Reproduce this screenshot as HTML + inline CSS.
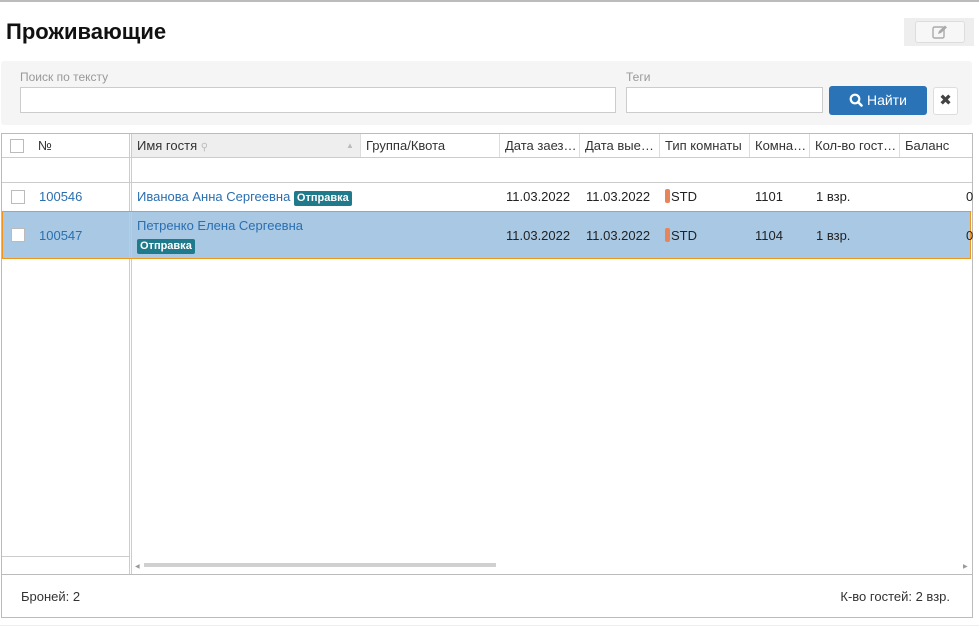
<!DOCTYPE html>
<html><head><meta charset="utf-8"><style>
*{box-sizing:border-box;margin:0;padding:0}
body{width:979px;height:629px;background:#fff;font-family:"Liberation Sans","DejaVu Sans",sans-serif;font-size:13px;color:#222;position:relative;overflow:hidden}
.a{position:absolute}
.t{white-space:nowrap}
.inp{position:absolute;background:#fff;border:1px solid #ccc}
.hc{position:absolute;top:134px;height:23px;line-height:23px;padding-left:5px;border-right:1px solid #ddd;white-space:nowrap;overflow:hidden;color:#333}
.cb{position:absolute;width:14px;height:14px;border:1px solid #bbb;background:#fff}
.lnk{color:#2a6fb0}
.tag{display:inline-block;background:#1f7a8c;color:#fff;font-size:11px;padding:1px 3px;border-radius:2px;line-height:13px;font-weight:bold}
.cell{position:absolute;white-space:nowrap}
</style></head><body>
<div class="a" style="left:0;top:0;width:979px;height:2px;background:#bbb"></div>
<div class="a t" style="left:6px;top:19px;font-size:22px;font-weight:bold;color:#111">Проживающие</div>
<div class="a" style="left:904px;top:18px;width:70px;height:28px;background:#eee"></div>
<div class="a" style="left:915px;top:21px;width:50px;height:22px;background:#f7f7f7;border:1px solid #ddd;border-radius:3px"></div>
<svg class="a" style="left:932px;top:25px" width="16" height="14" viewBox="0 0 16 14"><rect x="1" y="2" width="11" height="11" rx="1.5" fill="none" stroke="#aaa" stroke-width="1.4"/><path d="M6 9 L7 6 L13 0.5 L15 2.5 L9 8 Z" fill="#aaa"/></svg>

<div class="a" style="left:1px;top:61px;width:971px;height:64px;background:#f5f5f5;border-radius:3px"></div>
<div class="a t" style="left:20px;top:70px;font-size:12px;color:#999">Поиск по тексту</div>
<div class="inp" style="left:20px;top:87px;width:596px;height:26px"></div>
<div class="a t" style="left:626px;top:70px;font-size:12px;color:#999">Теги</div>
<div class="inp" style="left:626px;top:87px;width:197px;height:26px"></div>
<div class="a" style="left:829px;top:86px;width:98px;height:29px;background:#2a73b7;border-radius:3px;color:#fff;font-size:14px;line-height:29px;text-align:center">
<svg width="14" height="14" viewBox="0 0 14 14" style="vertical-align:-2px"><circle cx="6" cy="6" r="4.3" fill="none" stroke="#fff" stroke-width="2.2"/><path d="M9 9 L12.5 12.5" stroke="#fff" stroke-width="2.6" stroke-linecap="round"/></svg> Найти</div>
<div class="a" style="left:933px;top:87px;width:25px;height:28px;background:#fff;border:1px solid #ddd;border-radius:3px;text-align:center;line-height:26px;font-weight:bold;color:#444;font-size:15px">✖</div>

<div class="a" style="left:1px;top:133px;width:972px;height:485px;border:1px solid #bbb"></div>
<div class="a" style="left:2px;top:157px;width:970px;height:1px;background:#ccc"></div>
<div class="a" style="left:2px;top:182px;width:970px;height:1px;background:#ccc"></div>
<div class="a" style="left:129px;top:134px;width:3px;height:440px;border-left:1px solid #ccc;border-right:1px solid #ccc"></div>
<div class="a" style="left:132px;top:134px;width:229px;height:23px;background:#eee"></div>
<div class="cb" style="left:10px;top:139px"></div>
<div class="hc" style="left:33px;width:96px;border:none">№</div>
<div class="hc" style="left:132px;width:229px">Имя гостя <span style="color:#bbb;font-size:10px">⚲</span><span style="position:absolute;left:214px;color:#bbb;font-size:8px">▲</span></div>
<div class="hc" style="left:361px;width:139px">Группа/Квота</div>
<div class="hc" style="left:500px;width:80px">Дата заез…</div>
<div class="hc" style="left:580px;width:80px">Дата вые…</div>
<div class="hc" style="left:660px;width:90px">Тип комнаты</div>
<div class="hc" style="left:750px;width:60px">Комна…</div>
<div class="hc" style="left:810px;width:90px">Кол-во гост…</div>
<div class="hc" style="left:900px;width:72px;border:none">Баланс</div>

<div class="a" style="left:2px;top:211px;width:970px;height:1px;background:#ddd"></div>
<div class="cb" style="left:11px;top:190px"></div>
<div class="cell lnk" style="left:39px;top:189px">100546</div>
<div class="cell" style="left:137px;top:189px"><span class="lnk">Иванова Анна Сергеевна</span> <span class="tag">Отправка</span></div>
<div class="cell" style="left:506px;top:189px">11.03.2022</div>
<div class="cell" style="left:586px;top:189px">11.03.2022</div>
<div class="cell" style="left:665px;top:189px"><span style="display:inline-block;width:5px;height:14px;background:#e8845a;border-radius:2px;vertical-align:-2px;margin-right:1px"></span>STD</div>
<div class="cell" style="left:755px;top:189px">1101</div>
<div class="cell" style="left:816px;top:189px">1 взр.</div>
<div class="cell" style="left:966px;top:189px">0</div>

<div class="a" style="left:2px;top:211px;width:969px;height:48px;background:#a8c8e4;border:1px solid #f0961e"></div>
<div class="a" style="left:129px;top:212px;width:3px;height:46px;border-left:1px solid #bcd;border-right:1px solid #bcd"></div>
<div class="cb" style="left:11px;top:228px"></div>
<div class="cell lnk" style="left:39px;top:228px">100547</div>
<div class="cell lnk" style="left:137px;top:218px">Петренко Елена Сергеевна</div>
<div class="cell" style="left:137px;top:237px"><span class="tag">Отправка</span></div>
<div class="cell" style="left:506px;top:228px">11.03.2022</div>
<div class="cell" style="left:586px;top:228px">11.03.2022</div>
<div class="cell" style="left:665px;top:228px"><span style="display:inline-block;width:5px;height:14px;background:#e8845a;border-radius:2px;vertical-align:-2px;margin-right:1px"></span>STD</div>
<div class="cell" style="left:755px;top:228px">1104</div>
<div class="cell" style="left:816px;top:228px">1 взр.</div>
<div class="cell" style="left:966px;top:228px">0</div>

<div class="a" style="left:2px;top:556px;width:128px;height:1px;background:#ccc"></div>
<div class="a" style="left:135px;top:563px;font-size:6px;color:#999">◀</div>
<div class="a" style="left:144px;top:563px;width:352px;height:4px;background:#d0d0d0"></div>
<div class="a" style="left:963px;top:563px;font-size:6px;color:#999">▶</div>
<div class="a" style="left:2px;top:574px;width:970px;height:1px;background:#bbb"></div>
<div class="a t" style="left:21px;top:589px;color:#333">Броней: 2</div>
<div class="a t" style="right:29px;top:589px;color:#333">К-во гостей: 2 взр.</div>
<div class="a" style="left:0;top:625px;width:979px;height:1px;background:#eee"></div>
</body></html>
